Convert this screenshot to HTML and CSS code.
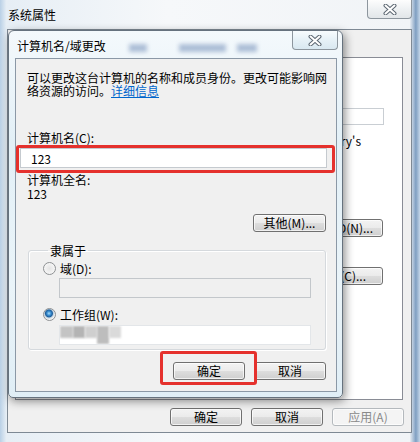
FILE: index.html
```html
<!DOCTYPE html>
<html lang="zh-CN">
<head>
    <meta charset="UTF-8">
    <title>系统属性</title>
    <link rel="stylesheet" href="styles.css">
</head>
<body>
    <div class="sys">
        <div class="sys-title">
            <span class="title-text">系统属性</span>
            <button class="close close-sys">
                <svg width="14" height="11" viewBox="0 0 14 11"><path d="M2.5 1.5 L11.5 9.5 M11.5 1.5 L2.5 9.5" stroke="#5b6671" stroke-width="4" stroke-linecap="round"/><path d="M2.5 1.5 L11.5 9.5 M11.5 1.5 L2.5 9.5" stroke="#fff" stroke-width="2" stroke-linecap="round"/></svg>
            </button>
        </div>
        <div class="sys-client">
            <div class="tabs"></div>
            <div class="tab-panel">
                <div class="tp-input"></div>
                <div class="tp-hint">"Mary's</div>
                <div class="btn tp-btn tp-net"><span>网络 ID(N)...</span></div>
                <div class="btn tp-btn tp-default"><span>更改(C)...</span></div>
            </div>
            <div class="sys-buttons">
                <button class="btn">确定</button>
                <button class="btn">取消</button>
                <button class="btn" disabled>应用(A)</button>
            </div>
        </div>
    </div>

    <!-- 计算机名/域更改 dialog, floating over the system properties window -->
    <div class="dlg">
        <div class="dlg-title">
            <span class="title-text">计算机名/域更改</span>
            <span class="ghost g1"></span>
            <span class="ghost g2"></span>
            <span class="ghost g3"></span>
            <button class="close close-dlg">
                <svg width="14" height="11" viewBox="0 0 14 11"><path d="M2.5 1.5 L11.5 9.5 M11.5 1.5 L2.5 9.5" stroke="#5b6671" stroke-width="4" stroke-linecap="round"/><path d="M2.5 1.5 L11.5 9.5 M11.5 1.5 L2.5 9.5" stroke="#fff" stroke-width="2" stroke-linecap="round"/></svg>
            </button>
        </div>
        <div class="dlg-client">
            <p class="intro">可以更改这台计算机的名称和成员身份。更改可能影响网络资源的访问。<a href="#">详细信息</a></p>

            <div class="label name-label">计算机名(C):</div>
            <div class="field name-field">123</div>

            <div class="label full-label">计算机全名:</div>
            <div class="label">123</div>

            <div class="row-right">
                <button class="btn btn-more">其他(M)...</button>
            </div>

            <fieldset class="group">
                <legend>隶属于</legend>
                <div class="radio-row">
                    <span class="radio"></span>
                    <span>域(D):</span>
                </div>
                <div class="field field-disabled"></div>
                <div class="radio-row">
                    <span class="radio checked"></span>
                    <span>工作组(W):</span>
                </div>
                <div class="field wg-field">
                    <span class="blur b1"></span><span class="blur b2"></span><span class="blur b3"></span><span class="blur b4"></span><span class="blur b5"></span>
                </div>
            </fieldset>

            <div class="row-right dlg-buttons">
                <button class="btn">确定</button>
                <button class="btn">取消</button>
            </div>
        </div>
    </div>

    <div class="mark mark-name"></div>
    <div class="mark mark-ok"></div>
</body>
</html>
```

FILE: styles.css
```css
* {
    margin: 0;
    padding: 0;
    box-sizing: border-box;
}

body {
    width: 420px;
    height: 442px;
    overflow: hidden;
    position: relative;
    font-family: 'Noto Sans CJK SC', sans-serif;
    font-size: 12px;
    line-height: 13px;
    color: #000;
    background: #dfe9f2;
}

/* outer window: 系统属性 */
.sys {
    width: 420px;
    height: 442px;
    background: linear-gradient(90deg, #b9d0e6 0, #e6eef5 1.5%, #f6f8fa 40%, #f1f4f7 97.5%, #7f9fc2 99%, #c4d6e8 100%);
}

.sys-title {
    height: 29px;
    display: flex;
    align-items: flex-start;
}

.title-text {
    padding: 8px 0 0 8px;
    font-size: 12px;
}

.close {
    width: 45px;
    height: 19px;
    border: 1px solid #8d969e;
    border-top: none;
    border-radius: 0 0 4px 4px;
    background: linear-gradient(#fdfdfd, #eef1f3 50%, #e2e6e9);
    display: flex;
    align-items: center;
    justify-content: center;
}

.close-sys {
    margin-left: auto;
    margin-right: 8px;
}

.sys-client {
    height: 404px;
    margin: 0 8px 0 7px;
    border: 1px solid #7e8994;
    background: #f0f0f0;
}

.tabs {
    height: 27px;
}

.tab-panel {
    height: 343px;
    margin: 0 8px 0 7px;
    border: 1px solid #898c95;
    background: #fff;
    padding: 50px 18px 0 0;
    display: flex;
    flex-direction: column;
    align-items: flex-end;
}

.tp-input {
    width: 200px;
    height: 17px;
    border: 1px solid #c9ced3;
}

.tp-hint {
    margin: 9px 23px 0 0;
    white-space: nowrap;
}

.tp-btn {
    width: 140px;
    margin-top: 72px;
    margin-right: 1px;
    display: flex;
    align-items: center;
    justify-content: flex-end;
    padding-right: 9px;
    white-space: nowrap;
}

.tp-btn + .tp-btn {
    margin-top: 30px;
    padding-right: 16px;
}

.tp-default {
    border-color: #3c7fb1;
    box-shadow: inset 0 0 0 1px #a6d8f6;
}

.sys-buttons {
    display: flex;
    justify-content: flex-end;
    gap: 9px;
    margin-top: 8px;
    padding-right: 7px;
}

/* buttons */
.btn {
    width: 72px;
    height: 18px;
    font-family: inherit;
    font-size: 12px;
    line-height: 14px;
    color: #000;
    border: 1px solid #707070;
    border-radius: 3px;
    background: linear-gradient(#f3f3f3 0, #ebebeb 48%, #dddddd 52%, #cfcfcf 100%);
    box-shadow: inset 0 0 0 1px rgba(255, 255, 255, 0.7);
}

.btn:disabled {
    color: #8a8a8a;
    border-color: #b4b9bd;
    background: #f4f4f4;
}

/* dialog: 计算机名/域更改 */
.dlg {
    position: absolute;
    left: 8px;
    top: 30px;
    width: 335px;
    height: 368px;
    border: 1px solid #66727e;
    border-radius: 6px 6px 5px 5px;
    background: linear-gradient(#f4f9fc, #e3f0f7 30%, #eaf4f9 70%, #e0eef6);
    box-shadow: 2px 3px 10px rgba(0, 0, 0, 0.45);
}

.dlg-title {
    height: 27px;
    display: flex;
    align-items: flex-start;
}

.dlg-title .title-text {
    padding: 8px 0 0 8px;
}

.ghost {
    height: 8px;
    margin-top: 13px;
    background: rgba(70, 105, 160, 0.4);
    filter: blur(2px);
}

.g1 { width: 18px; margin-left: 23px; }
.g2 { width: 47px; margin-left: 32px; }
.g3 { width: 20px; margin-left: 11px; }

.close-dlg {
    margin-left: auto;
    margin-right: 4px;
    width: 46px;
    background: linear-gradient(#f8fcfe, #e6f1f7 50%, #d9e8f1);
}

.dlg-client {
    height: 334px;
    margin: 0 5px 0 6px;
    border: 1px solid #8b98a6;
    background: #f0f0f0;
    padding: 12px 10px 0 0;
}

.intro {
    padding-left: 11px;
    width: 322px;
}

.intro a {
    color: #0066cc;
}

.label {
    padding-left: 11px;
    line-height: 14px;
}

.name-label {
    margin-top: 34px;
}

.field {
    height: 20px;
    border: 1px solid #c5cacf;
    background: #fff;
}

.name-field {
    margin: 3px 0 0 4px;
    width: 307px;
    padding: 3px 0 0 10px;
}

.full-label {
    margin-top: 5px;
}

.row-right {
    display: flex;
    justify-content: flex-end;
    gap: 9px;
}

.btn-more {
    width: 73px;
    margin-top: 13px;
}

.group {
    margin: 12px 0 0 12px;
    width: 298px;
    height: 106px;
    border: 1px solid #d5d9dd;
    border-radius: 3px;
    box-shadow: inset 1px 1px 0 #fff, 1px 1px 0 #fff;
    padding: 4px 14px 0 14px;
}

.group legend {
    margin-left: 5px;
    padding: 0 2px;
}

.radio-row {
    display: flex;
    align-items: center;
    gap: 4px;
    height: 14px;
}

.radio {
    width: 13px;
    height: 13px;
    border: 1px solid #8e9193;
    border-radius: 50%;
    background: radial-gradient(circle, #e4e4e4 0, #f6f6f6 70%, #fff 100%);
}

.radio.checked {
    background: radial-gradient(circle at 45% 40%, #a9dcf9 0, #3b8fd1 2px, #1d5e9c 3.5px, #c3d3e0 4.5px, #f4f4f4 6px);
}

.field-disabled {
    margin: 3px 0 0 16px;
    background: #f0f0f0;
    border-color: #c3c7cb;
    margin-bottom: 9px;
}

.wg-field {
    margin: 4px 0 0 16px;
    border-color: #e3e6e9;
    display: flex;
    overflow: hidden;
}

.blur {
    height: 12px;
    filter: blur(1px);
}

.b1 { width: 13px; background: #c4c4c4; }
.b2 { width: 12px; background: #b4b4b4; }
.b3 { width: 12px; background: #cfcfcf; }
.b4 { width: 12px; background: #bdbdbd; height: 18px; }
.b5 { width: 12px; background: #dadada; }

.dlg-buttons {
    margin-top: 12px;
}

/* red highlight marks drawn over the screenshot */
.mark {
    position: absolute;
    border: 3px solid #e5312d;
    border-radius: 3px;
}

.mark-name {
    left: 16px;
    top: 145px;
    width: 319px;
    height: 28px;
}

.mark-ok {
    left: 160px;
    top: 351px;
    width: 97px;
    height: 34px;
}
```
